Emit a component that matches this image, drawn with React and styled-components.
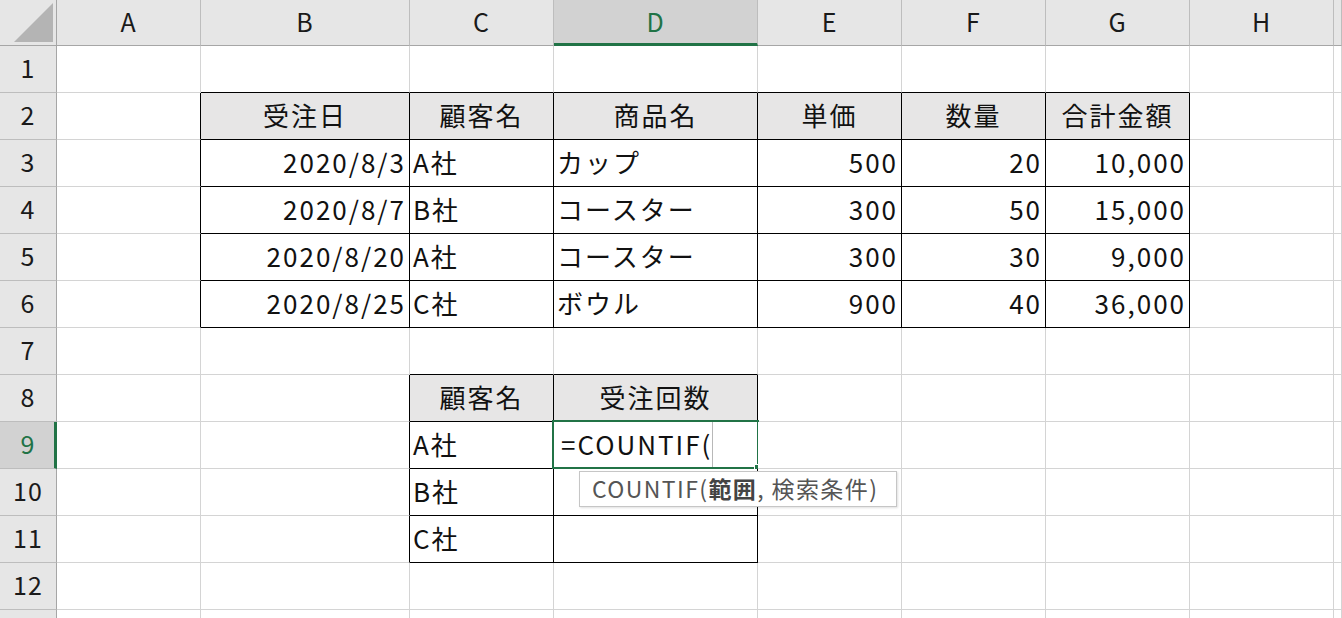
import React from 'react';
import styled, { createGlobalStyle } from 'styled-components';

const GlobalStyle = createGlobalStyle`
  html, body {
    margin: 0;
    padding: 0;
    background: #fff;
    overflow: hidden;
  }
  body {
    font-family: "Noto Sans CJK JP", "Noto Sans", sans-serif;
  }
`;

const GREEN = '#217346';
const GRID = '#d4d4d4';
const HEAD_LINE = '#bdbdbd';
const HEAD_EDGE = '#a6a6a6';

const COLS = ['A', 'B', 'C', 'D', 'E', 'F', 'G', 'H'];
const ROWS = 13;
const LAST_LABEL = 12; // row 13 is only a sliver at the bottom edge

// table contents by row number, columns B..G
const cells = {
  2: { B: ['受注日', 'head'], C: ['顧客名', 'head'], D: ['商品名', 'head'], E: ['単価', 'head'], F: ['数量', 'head'], G: ['合計金額', 'head'] },
  3: { B: ['2020/8/3', 'right'], C: ['A社'], D: ['カップ'], E: ['500', 'right'], F: ['20', 'right'], G: ['10,000', 'right'] },
  4: { B: ['2020/8/7', 'right'], C: ['B社'], D: ['コースター'], E: ['300', 'right'], F: ['50', 'right'], G: ['15,000', 'right'] },
  5: { B: ['2020/8/20', 'right'], C: ['A社'], D: ['コースター'], E: ['300', 'right'], F: ['30', 'right'], G: ['9,000', 'right'] },
  6: { B: ['2020/8/25', 'right'], C: ['C社'], D: ['ボウル'], E: ['900', 'right'], F: ['40', 'right'], G: ['36,000', 'right'] },
  8: { C: ['顧客名', 'head'], D: ['受注回数', 'head'] },
  9: { C: ['A社'], D: [''] },
  10: { C: ['B社'], D: [''] },
  11: { C: ['C社'], D: [''] },
};

const inTable = (r, c) => !!(cells[r] && cells[r][c]);

const Sheet = styled.div`
  display: grid;
  grid-template-columns: 57px 144px 209px 144px 204px 144px 144px 144px 144px 1fr;
  grid-template-rows: 46px repeat(${ROWS}, 47px);
  width: 1342px;
  height: 618px;
  overflow: hidden;
`;

const Corner = styled.div`
  box-sizing: border-box;
  background: #e6e6e6;
  border-right: 1px solid ${HEAD_EDGE};
  border-bottom: 1px solid ${HEAD_EDGE};
  display: flex;
  align-items: flex-end;
  justify-content: flex-end;
  padding: 0 3px 3px 0;
`;

const ColHead = styled.div`
  box-sizing: border-box;
  background: ${p => (p.$active ? '#d2d2d2' : '#e6e6e6')};
  color: ${p => (p.$active ? GREEN : '#1a1a1a')};
  border-right: 1px solid ${HEAD_LINE};
  border-bottom: ${p => (p.$active ? `3px solid ${GREEN}` : `1px solid ${HEAD_EDGE}`)};
  display: flex;
  align-items: center;
  justify-content: center;
  padding-bottom: ${p => (p.$active ? '2px' : '4px')};
  font-size: 25px;
  letter-spacing: 1px;
`;

const RowHead = styled.div`
  box-sizing: border-box;
  background: ${p => (p.$active ? '#d2d2d2' : '#e6e6e6')};
  color: ${p => (p.$active ? GREEN : '#1a1a1a')};
  border-right: ${p => (p.$active ? `3px solid ${GREEN}` : `1px solid ${HEAD_EDGE}`)};
  border-bottom: 1px solid ${HEAD_LINE};
  display: flex;
  align-items: center;
  justify-content: center;
  padding-left: ${p => (p.$active ? '2px' : '0')};
  padding-bottom: 4px;
  font-size: 25px;
  letter-spacing: 1px;
`;

const Cell = styled.div`
  box-sizing: border-box;
  position: relative;
  background: ${p => (p.$head ? '#e7e6e6' : '#fff')};
  color: #111;
  border-right: 1px solid ${p => p.$right};
  border-bottom: 1px solid ${p => p.$bottom};
  display: flex;
  align-items: center;
  justify-content: ${p => (p.$align === 'right' ? 'flex-end' : p.$align === 'center' ? 'center' : 'flex-start')};
  padding: 0 3px 4px 3px;
  font-size: 26px;
  letter-spacing: 2px;
  white-space: nowrap;
`;

const Selection = styled.div`
  position: absolute;
  top: -2px;
  left: -2px;
  right: -2px;
  bottom: -1px;
  border: 2px solid ${GREEN};
  pointer-events: none;
`;

const FillHandle = styled.div`
  position: absolute;
  right: -5px;
  bottom: -5px;
  width: 6px;
  height: 6px;
  background: ${GREEN};
  border: 1px solid #fff;
`;

const Formula = styled.span`
  display: flex;
  align-items: center;
  height: 100%;
  padding-left: 4px;
`;

const Caret = styled.span`
  display: inline-block;
  width: 1px;
  height: 46px;
  margin-top: 4px;
  background: #b8b8b8;
`;

const Tooltip = styled.div`
  position: absolute;
  top: 49px;
  left: 25px;
  width: 318px;
  height: 36px;
  box-sizing: border-box;
  background: #fff;
  border: 1px solid #c6c6c6;
  box-shadow: 1px 1px 2px rgba(0, 0, 0, 0.12);
  color: #555;
  font-size: 23px;
  letter-spacing: 1.4px;
  display: flex;
  align-items: center;
  padding: 0 0 2px 12px;
  white-space: nowrap;
  z-index: 2;

  & b {
    font-weight: 700;
    color: #444;
  }
`;

const CornerMark = () => (
  <svg width="39" height="39" viewBox="0 0 39 39">
    <polygon points="39,0 39,39 0,39" fill="#b4b4b4" />
  </svg>
);

export default function App() {
  const items = [<Corner key="corner"><CornerMark /></Corner>];
  COLS.forEach(c => items.push(<ColHead key={`h${c}`} $active={c === 'D'}>{c}</ColHead>));
  items.push(<ColHead key="hI" />);

  const allCols = [...COLS, 'I'];
  for (let r = 1; r <= ROWS; r++) {
    items.push(<RowHead key={`r${r}`} $active={r === 9}>{r <= LAST_LABEL ? r : ''}</RowHead>);
    allCols.forEach((c, i) => {
      const next = allCols[i + 1];
      const data = cells[r] && cells[r][c];
      const right = inTable(r, c) || (next && inTable(r, next)) ? '#000' : GRID;
      const bottom = inTable(r, c) || inTable(r + 1, c) ? '#000' : GRID;
      const head = data && data[1] === 'head';
      const align = head ? 'center' : data && data[1];
      const active = r === 9 && c === 'D';
      items.push(
        <Cell key={`${c}${r}`} $right={right} $bottom={bottom} $head={head} $align={align}>
          {active ? (
            <>
              <Formula>=COUNTIF(<Caret /></Formula>
              <Selection><FillHandle /></Selection>
              <Tooltip>COUNTIF(<b>範囲</b>, 検索条件)</Tooltip>
            </>
          ) : (
            data && data[0]
          )}
        </Cell>
      );
    });
  }

  return (
    <>
      <GlobalStyle />
      <Sheet>{items}</Sheet>
    </>
  );
}
